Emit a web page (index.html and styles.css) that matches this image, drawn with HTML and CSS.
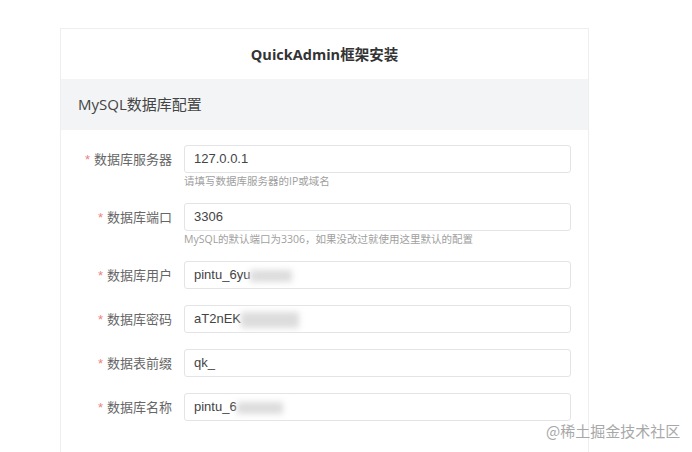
FILE: index.html
```html
<!DOCTYPE html>
<html>

<head>
    <title>QuickAdmin框架安装</title>
    <link rel="stylesheet" href="styles.css">
</head>

<body>
    <div class="container">
        <h2 class="title">QuickAdmin框架安装</h2>
        <div class="section-head">MySQL数据库配置</div>
        <form class="form">
            <div class="form-group">
                <label class="form-label"><span class="req">*</span>数据库服务器</label>
                <div class="form-field">
                    <div class="input">127.0.0.1</div>
                    <div class="help">请填写数据库服务器的IP或域名</div>
                </div>
            </div>
            <div class="form-group">
                <label class="form-label"><span class="req">*</span>数据库端口</label>
                <div class="form-field">
                    <div class="input">3306</div>
                    <div class="help">MySQL的默认端口为3306，如果没改过就使用这里默认的配置</div>
                </div>
            </div>
            <div class="form-group">
                <label class="form-label"><span class="req">*</span>数据库用户</label>
                <div class="form-field">
                    <div class="input">pintu_6yu<span class="blur blur-user"></span></div>
                </div>
            </div>
            <div class="form-group">
                <label class="form-label"><span class="req">*</span>数据库密码</label>
                <div class="form-field">
                    <div class="input">aT2nEK<span class="blur blur-pass"></span></div>
                </div>
            </div>
            <div class="form-group">
                <label class="form-label"><span class="req">*</span>数据表前缀</label>
                <div class="form-field">
                    <div class="input">qk_</div>
                </div>
            </div>
            <div class="form-group">
                <label class="form-label"><span class="req">*</span>数据库名称</label>
                <div class="form-field">
                    <div class="input">pintu_6<span class="blur blur-name"></span></div>
                </div>
            </div>
        </form>
    </div>
    <div class="watermark">@稀土掘金技术社区</div>
</body>

</html>
```

FILE: styles.css
```css
body {
    font-family: "Open Sans", "Noto Sans CJK SC", sans-serif;
    background-color: #fff;
    color: #333;
    margin: 0;
    padding: 0;
}

.container {
    width: 527px;
    margin: 28px 0 0 60px;
    border: 1px solid #eceef0;
    border-bottom: none;
    height: 440px;
}

.title {
    margin: 0;
    height: 50px;
    line-height: 52px;
    text-align: center;
    font-size: 14.5px;
    font-weight: bold;
    color: #333;
}

.section-head {
    height: 51px;
    line-height: 51px;
    padding-left: 17px;
    background-color: #f3f4f6;
    font-size: 15px;
    color: #444;
}

.form {
    padding: 15px 17px 0 0;
}

.form-group {
    display: flex;
    margin-bottom: 16px;
}

.form-label {
    width: 111px;
    margin-right: 12px;
    text-align: right;
    height: 28px;
    line-height: 28px;
    font-size: 13px;
    color: #666;
    flex-shrink: 0;
}

.req {
    color: #f08080;
    margin-right: 4px;
    font-family: "Liberation Sans", sans-serif;
}

.form-field {
    flex: 1;
}

.input {
    height: 26px;
    line-height: 26px;
    border: 1px solid #e2e4e8;
    border-radius: 3px;
    padding: 0 9px;
    font-family: "Liberation Sans", "Noto Sans CJK SC", sans-serif;
    font-size: 13px;
    color: #444;
    white-space: nowrap;
    overflow: hidden;
}

.help {
    margin-top: 2px;
    height: 12px;
    line-height: 12px;
    font-size: 10.5px;
    color: #a0a0a0;
    overflow: visible;
}

.blur {
    display: inline-block;
    vertical-align: middle;
    height: 12px;
    background-color: #dcdcdc;
    filter: blur(3px);
}

.blur-user {
    width: 42px;
}

.blur-pass {
    width: 58px;
    height: 16px;
}

.blur-name {
    width: 46px;
}

.watermark {
    position: absolute;
    left: 546px;
    top: 420px;
    font-size: 15px;
    color: #a8a8a8;
    font-family: "Noto Sans CJK SC", sans-serif;
}
```
